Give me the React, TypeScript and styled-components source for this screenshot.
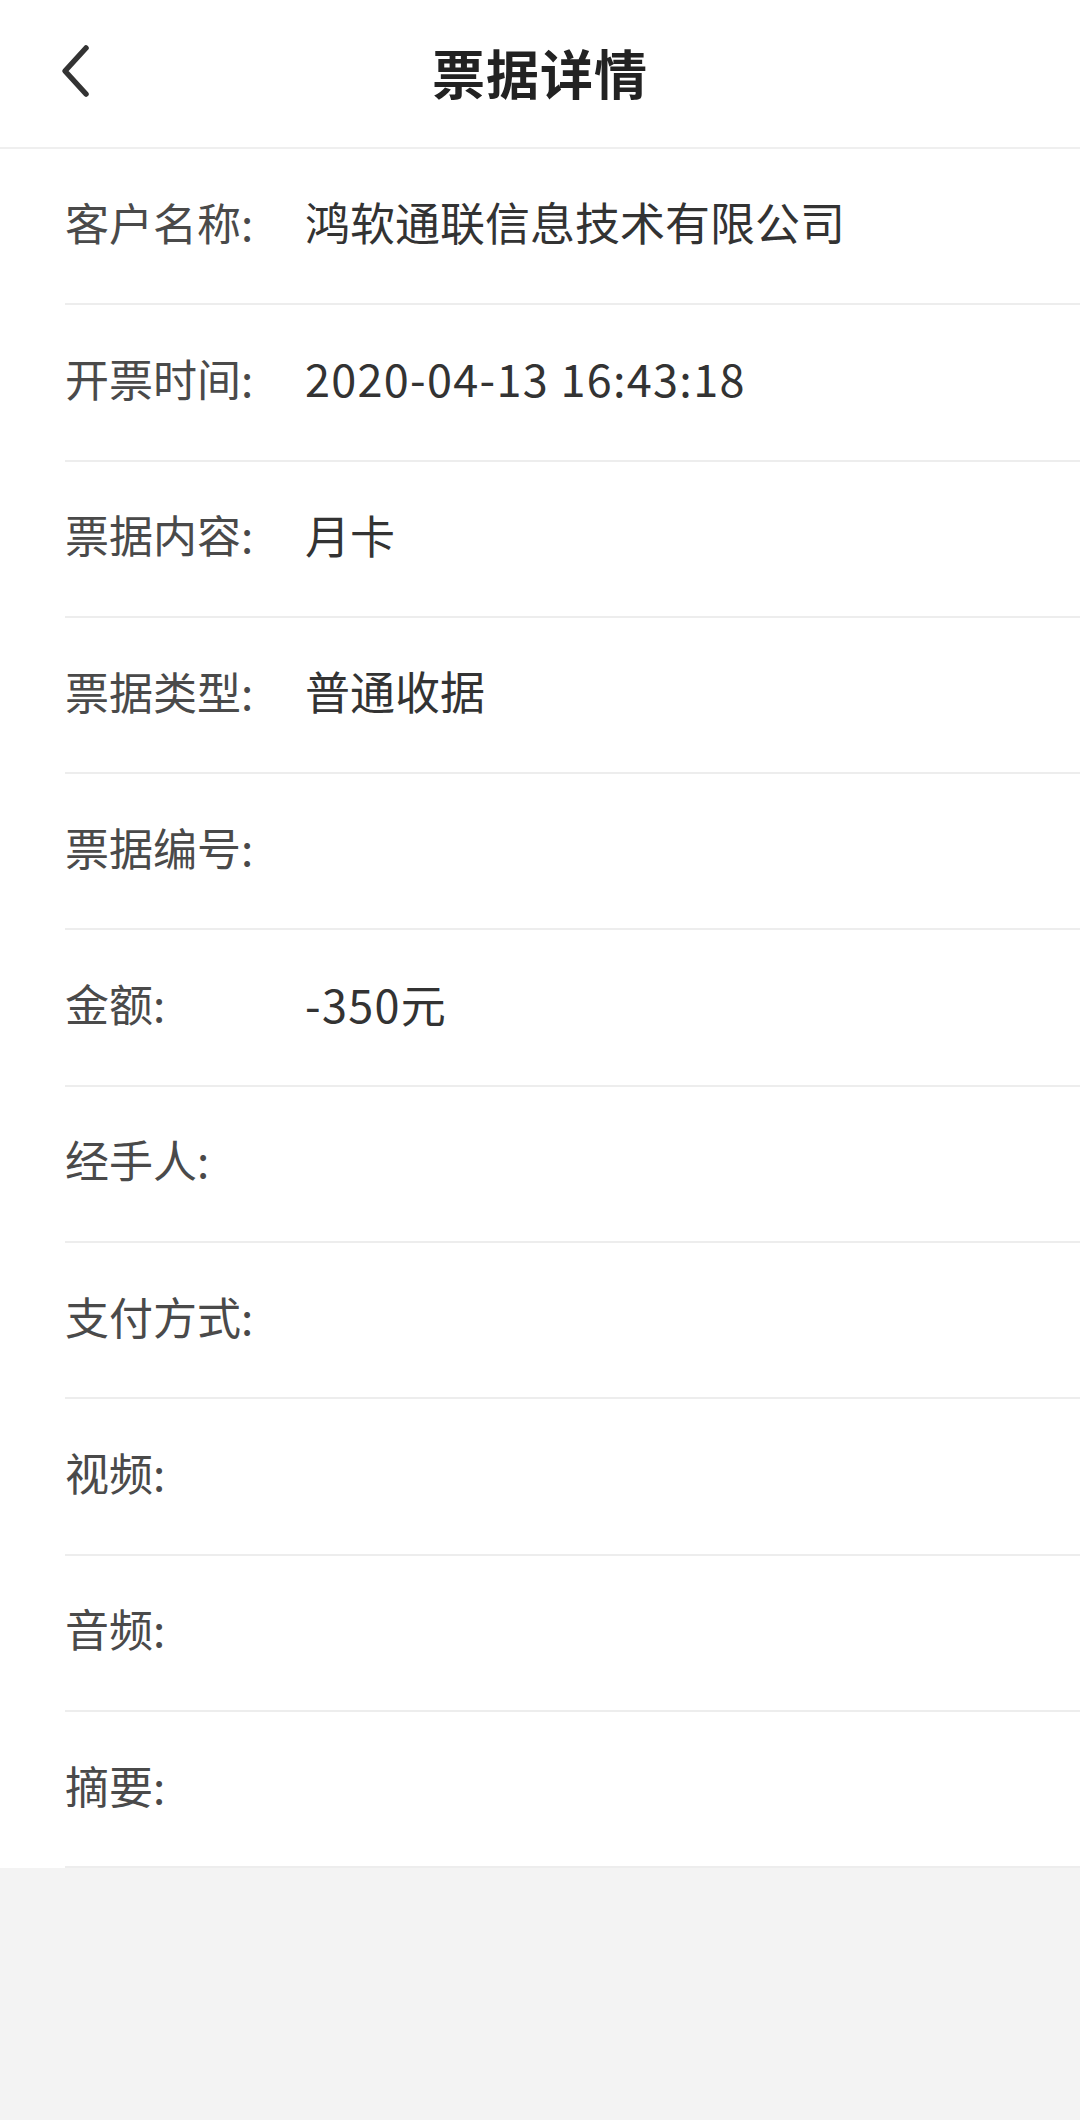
import styled, { createGlobalStyle } from 'styled-components';

const GlobalStyle = createGlobalStyle`
  html, body {
    margin: 0;
    padding: 0;
    background: #f3f3f3;
    font-family: "Noto Sans CJK SC", "Noto Sans", sans-serif;
  }
`;

const Page = styled.div`
  width: 1080px;
  min-height: 2120px;
  background: #f3f3f3;
`;

const Header = styled.div`
  position: relative;
  height: 147px;
  display: flex;
  align-items: center;
  justify-content: center;
  background: #fff;
  border-bottom: 2px solid #efefef;
`;

const BackButton = styled.button`
  position: absolute;
  left: 52px;
  top: 40px;
  width: 46px;
  height: 62px;
  padding: 0;
  border: 0;
  background: transparent;
  display: flex;
  align-items: center;
  justify-content: center;
  cursor: pointer;
`;

const Title = styled.h1`
  margin: 0 0 4px 0;
  font-size: 53px;
  font-weight: 700;
  color: #222;
  letter-spacing: 1px;
`;

const DetailList = styled.div`
  background: #fff;
`;

const Row = styled.div`
  box-sizing: border-box;
  margin-left: 65px;
  height: 156.3px;
  padding-bottom: 9px;
  display: flex;
  align-items: center;
  border-bottom: 2px solid #ededed;
`;

const Label = styled.div`
  width: 240px;
  flex-shrink: 0;
  font-size: 44px;
  color: #4a4a4a;
`;

const Value = styled.div<{ $latin?: boolean }>`
  font-size: 45px;
  color: #333;
  letter-spacing: ${(p) => (p.$latin ? '1.3px' : '0')};
`;

const rows: { label: string; value?: string; latin?: boolean }[] = [
  { label: '客户名称:', value: '鸿软通联信息技术有限公司' },
  { label: '开票时间:', value: '2020-04-13 16:43:18', latin: true },
  { label: '票据内容:', value: '月卡' },
  { label: '票据类型:', value: '普通收据' },
  { label: '票据编号:' },
  { label: '金额:', value: '-350元', latin: true },
  { label: '经手人:' },
  { label: '支付方式:' },
  { label: '视频:' },
  { label: '音频:' },
  { label: '摘要:' },
];

export default function App() {
  return (
    <Page>
      <GlobalStyle />
      <Header>
        <BackButton aria-label="返回">
          <svg width="34" height="54" viewBox="0 0 34 54">
            <path
              d="M28 4 L7 27 L28 50"
              fill="none"
              stroke="#333"
              strokeWidth="5.5"
              strokeLinecap="round"
              strokeLinejoin="round"
            />
          </svg>
        </BackButton>
        <Title>票据详情</Title>
      </Header>
      <DetailList>
        {rows.map((row) => (
          <Row key={row.label}>
            <Label>{row.label}</Label>
            {row.value && <Value $latin={row.latin}>{row.value}</Value>}
          </Row>
        ))}
      </DetailList>
    </Page>
  );
}
